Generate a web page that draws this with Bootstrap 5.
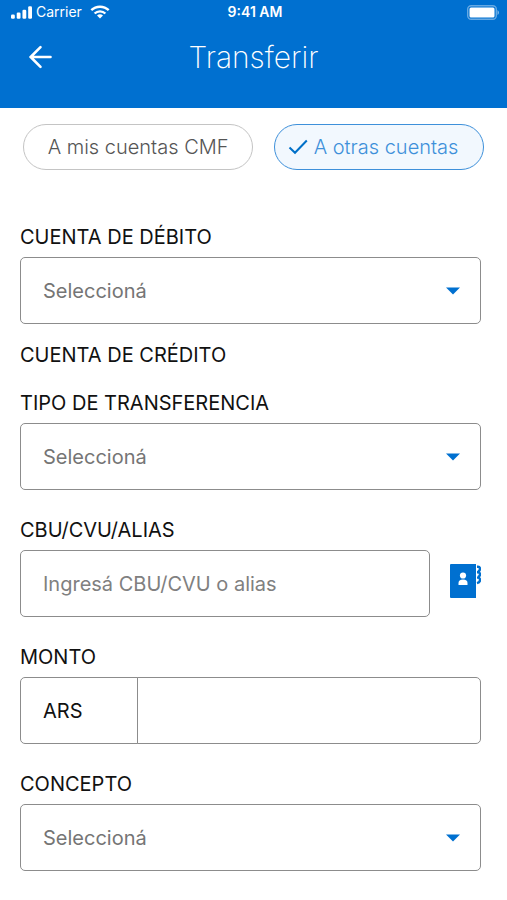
<!DOCTYPE html>
<html lang="es">
<head>
<meta charset="utf-8">
<meta name="viewport" content="width=device-width, initial-scale=1">
<title>Transferir</title>
<link href="https://cdn.jsdelivr.net/npm/bootstrap@5.3.0/dist/css/bootstrap.min.css" rel="stylesheet">
<style>
  :root { --brand: #0070d0; --line: #8c8c8c; }
  body { font-family: Inter, "Liberation Sans", sans-serif; color: #111; background: #fff; }
  svg { display: block; }
  .app-header { background: var(--brand); color: #fff; padding-bottom: 20px; }
  .status-bar { height: 24px; font-size: 14px; line-height: 24px; padding: 0 8px 0 11px; }
  .status-bar > * { flex: 1 1 0; }
  .title-bar { height: 64px; padding: 2px 20px 0; }
  .title-bar > * { flex: 1 1 0; }
  .title-bar h1 { font-size: 30px; line-height: 48px; font-weight: 200; flex: none; }
  .back-btn { padding: 8px; }
  .pills { gap: 21px; padding: 16px 23px 0; }
  .pill { height: 46px; border-radius: 23px; font-size: 20px; line-height: 24px; font-weight: 300; padding: 0 8px; white-space: nowrap; color: #555; border: 1px solid #c4c4c4; flex: 231 1 0; }
  .pill.selected { color: #3e90da; background: #f2f8fe; border-color: #3e90da; flex-grow: 209; gap: 6px; padding: 0 14px 0 2px; }
  .transfer-form { padding: 55px 26px 29px 20px; }
  .field-title { display: block; font-size: 20px; line-height: 24px; font-weight: 400; margin: 0 0 8px; }
  .field-group { margin-bottom: 28px; }
  .field-group.near { margin-bottom: 19px; }
  .section-title { margin-bottom: 24px; }
  .field { height: 67px; border: 1px solid var(--line); border-radius: 5px; font-size: 20px; line-height: 24px; padding: 0 22px; color: #757575; background-color: #fff; }
  select.field { background-image: url("data:image/svg+xml,%3Csvg xmlns='http://www.w3.org/2000/svg' viewBox='0 0 14 8'%3E%3Cpath d='M0 .5h14L7 7.500z' fill='%230070d0'/%3E%3C/svg%3E"); background-size: 14px 8px; background-position: right 20px center; }
  .field::placeholder { color: #808080; opacity: 1; }
  .currency { width: 118px; flex: none; color: #111; }
  .contact-btn { margin: 0 0 6px 20px; }
</style>
<script defer src="https://cdn.jsdelivr.net/npm/bootstrap@5.3.0/dist/js/bootstrap.bundle.min.js"></script>
</head>
<body>
<header class="app-header">
  <div class="status-bar d-flex align-items-center">
    <div class="d-flex align-items-center">
      <svg width="21" height="13" viewBox="0 0 22 13" fill="#fff" aria-hidden="true"><rect x="0" y="8.500" width="4" height="4.500" rx="1.300"/><rect x="6" y="6.500" width="4" height="6.500" rx="1.300"/><rect x="12" y="3.500" width="4" height="9.500" rx="1.300"/><rect x="18" y="0" width="4" height="13" rx="1.300"/></svg>
      <span class="ms-1 me-2">Carrier</span>
      <svg width="20" height="14" viewBox="0 0 20 14" fill="none" stroke="#fff" stroke-width="2.400" aria-hidden="true"><path d="M1.300 5.200a12.500 12.500 0 0 1 17.400 0M4.600 8.500a7.800 7.800 0 0 1 10.800 0"/><path d="M10 13.500 7 10.600a4.300 4.300 0 0 1 6 0z" fill="#fff" stroke="none"/></svg>
    </div>
    <div class="text-center fw-semibold">9:41 AM</div>
    <div class="d-flex justify-content-end">
      <svg width="32" height="15" viewBox="0 0 32 15" aria-hidden="true"><rect x=".7" y=".7" width="28.600" height="13.600" rx="3.500" fill="none" stroke="#fff" stroke-opacity=".4" stroke-width="1.400"/><rect x="2.500" y="2.500" width="25" height="10" rx="1.500" fill="#fff"/><path d="M30.500 5v5q1.500-1 1.500-2.500T30.500 5z" fill="#fff" fill-opacity=".5"/></svg>
    </div>
  </div>
  <div class="title-bar d-flex align-items-center">
    <div>
      <button type="button" class="btn border-0 back-btn" aria-label="Volver">
        <svg width="24" height="24" viewBox="0 0 24 24" fill="none" stroke="#fff" stroke-width="2.600" stroke-linecap="round" stroke-linejoin="round" aria-hidden="true"><path d="M22.500 12H2.500M12.500 2.200 2.700 12l9.800 9.800"/></svg>
      </button>
    </div>
    <h1 class="mb-0">Transferir</h1>
    <div></div>
  </div>
</header>
<main>
  <div class="pills d-flex" role="group" aria-label="Destino de la transferencia">
    <button type="button" class="btn pill">A mis cuentas CMF</button>
    <button type="button" class="btn pill selected d-flex align-items-center justify-content-center" aria-pressed="true">
      <svg width="20" height="16" viewBox="0 0 20 16" fill="none" stroke="#0070c8" stroke-width="2" aria-hidden="true"><path d="M1.500 8.500 7 13.800 18.800 1.500"/></svg>
      <span>A otras cuentas</span>
    </button>
  </div>
  <form class="transfer-form">
    <div class="field-group near">
      <label class="field-title" for="debito">CUENTA DE DÉBITO</label>
      <select class="form-select field" id="debito"><option>Seleccioná</option></select>
    </div>
    <h2 class="field-title section-title">CUENTA DE CRÉDITO</h2>
    <div class="field-group">
      <label class="field-title" for="tipo">TIPO DE TRANSFERENCIA</label>
      <select class="form-select field" id="tipo"><option>Seleccioná</option></select>
    </div>
    <div class="field-group">
      <label class="field-title" for="cbu">CBU/CVU/ALIAS</label>
      <div class="d-flex align-items-center">
        <input type="text" class="form-control field" id="cbu" placeholder="Ingresá CBU/CVU o alias">
        <button type="button" class="btn border-0 p-0 contact-btn" aria-label="Agenda de contactos">
          <svg width="31" height="34" viewBox="0 0 31 34" aria-hidden="true"><path d="M1 0h25v34H1q-1 0-1-1V1q0-1 1-1z" fill="#0070d0"/><circle cx="13" cy="11.500" r="3.100" fill="#fff"/><path d="M8.500 21v-2q0-3.500 4.500-3.500t4.500 3.500v2z" fill="#fff"/><path d="M27 2.800h1q2 0 2 2t-2 2.700M27 8.300h1q2 0 2 2t-2 2.700M27 13.600h1q2 0 2 2.400t-3 3.200" fill="none" stroke="#0070d0" stroke-width="2.400"/></svg>
        </button>
      </div>
    </div>
    <div class="field-group">
      <label class="field-title" for="monto">MONTO</label>
      <div class="input-group flex-nowrap">
        <span class="input-group-text field currency">ARS</span>
        <input type="text" class="form-control field" id="monto" inputmode="decimal">
      </div>
    </div>
    <div>
      <label class="field-title" for="concepto">CONCEPTO</label>
      <select class="form-select field" id="concepto"><option>Seleccioná</option></select>
    </div>
  </form>
</main>
</body>
</html>
